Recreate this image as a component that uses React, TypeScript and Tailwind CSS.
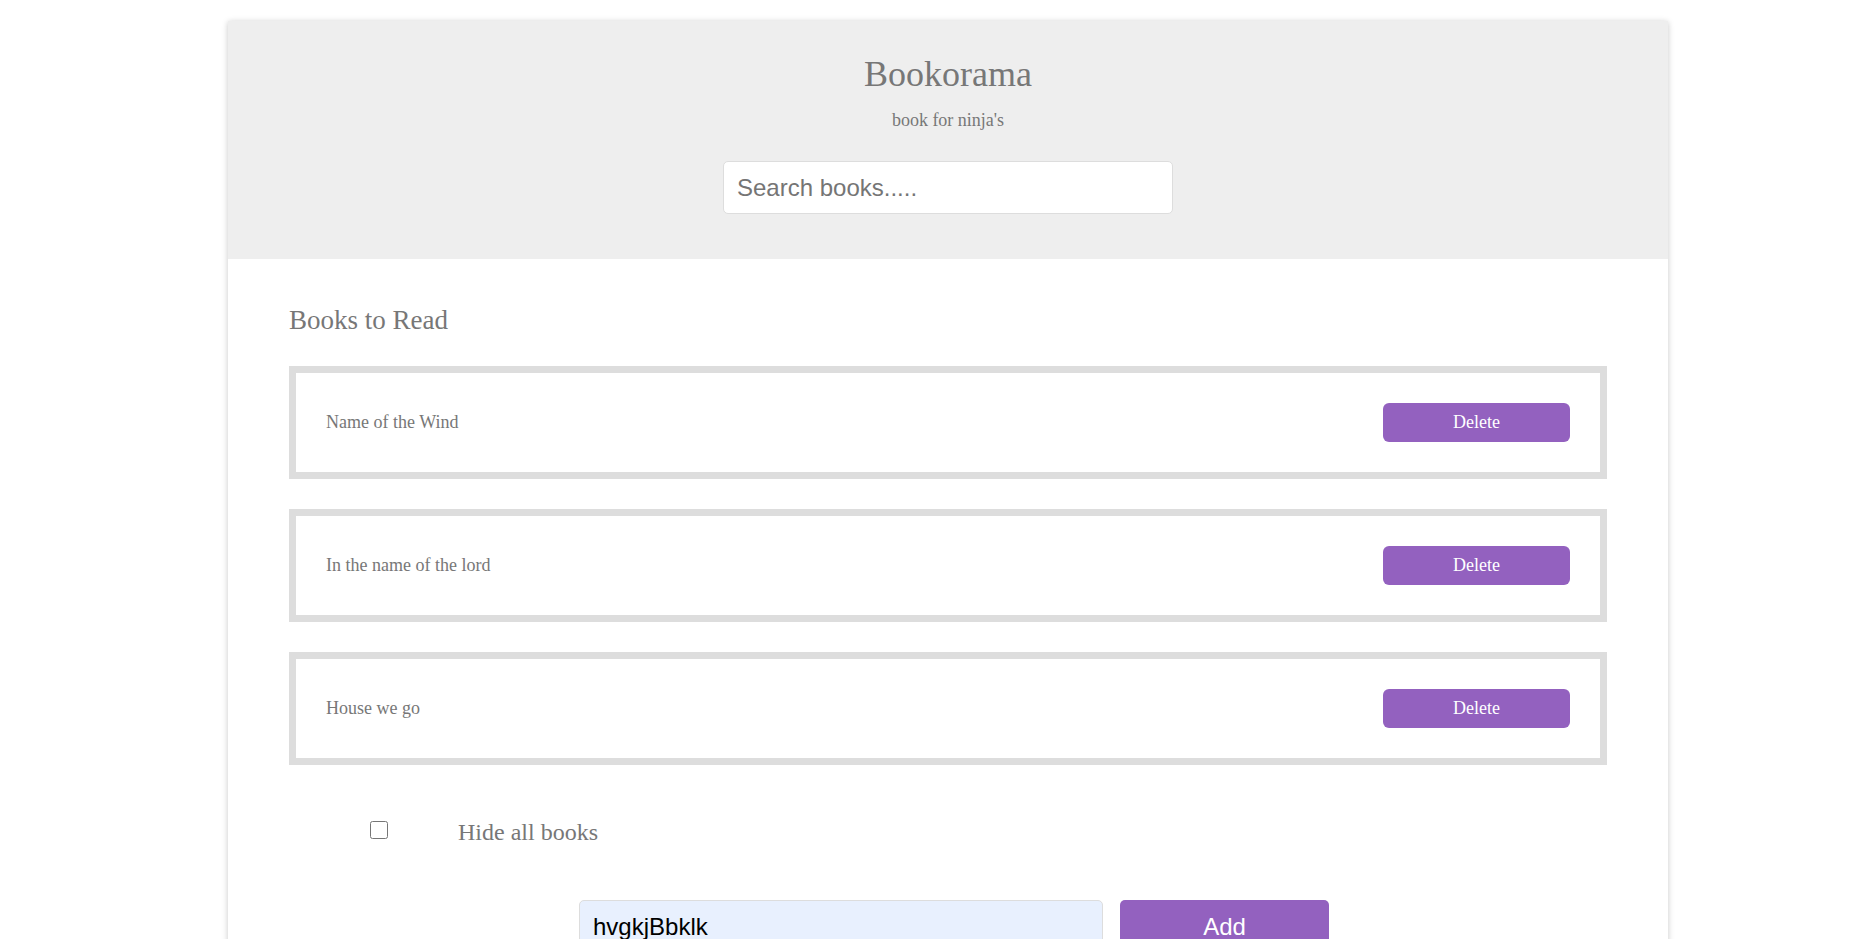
import { useState } from 'react';

const initialBooks = ['Name of the Wind', 'In the name of the lord', 'House we go'];

export default function App() {
  const [books, setBooks] = useState(initialBooks);
  const [hidden, setHidden] = useState(false);
  const [search, setSearch] = useState('');
  const [newBook, setNewBook] = useState('hvgkjBbklk');

  const visible = books.filter((b) => b.toLowerCase().includes(search.toLowerCase()));

  const addBook = () => {
    if (!newBook.trim()) return;
    setBooks([...books, newBook.trim()]);
    setNewBook('');
  };

  return (
    <div className="min-h-screen bg-white font-['Liberation_Serif',serif] text-[#777]">
      <div className="ml-[228px] mt-[21px] w-[1440px] bg-white shadow-[0_1px_6px_rgba(0,0,0,0.22)]">
        {/* Header */}
        <header className="flex h-[238px] flex-col items-center bg-[#eee] pt-[32px]">
          <h1 className="text-[36px] leading-[43px] font-normal">Bookorama</h1>
          <p className="mt-[13px] text-[18px] leading-[22px]">book for ninja's</p>
          <input
            value={search}
            onChange={(e) => setSearch(e.target.value)}
            placeholder="Search books....."
            className="mt-[30px] h-[53px] w-[450px] rounded-[5px] border border-[#ddd] bg-white px-[13px] font-['Liberation_Sans',sans-serif] text-[24px] text-[#555] placeholder:text-[#757575] outline-none"
          />
        </header>

        {/* Book list */}
        <div className="px-[61px] pt-[44px] pb-[40px]">
          <h2 className="text-[27px] leading-[34px]">Books to Read</h2>
          {!hidden && (
            <ul className="mt-[29px] flex flex-col gap-[30px]">
              {visible.map((book) => (
                <li
                  key={book}
                  className="flex h-[113px] items-center justify-between border-[7px] border-[#ddd] px-[30px]"
                >
                  <span className="text-[18px]">{book}</span>
                  <button
                    onClick={() => setBooks(books.filter((b) => b !== book))}
                    className="h-[39px] w-[187px] rounded-[6px] bg-[#9361bf] text-[18px] text-white"
                  >
                    Delete
                  </button>
                </li>
              ))}
            </ul>
          )}

          <div className="mt-[47px] flex h-[40px] items-center pl-[81px]">
            <input
              type="checkbox"
              checked={hidden}
              onChange={(e) => setHidden(e.target.checked)}
              className="mb-[4px] h-[18px] w-[18px]"
            />
            <label className="ml-[70px] text-[24px]">Hide all books</label>
          </div>

          <div className="mt-[48px] flex justify-center gap-[17px] pl-[12px]">
            <input
              value={newBook}
              onChange={(e) => setNewBook(e.target.value)}
              className="h-[53px] w-[524px] rounded-[5px] border border-[#ddd] bg-[#e8f0fe] px-[13px] font-['Liberation_Sans',sans-serif] text-[24px] text-black outline-none"
            />
            <button
              onClick={addBook}
              className="h-[53px] w-[209px] rounded-[5px] bg-[#9361bf] font-['Liberation_Sans',sans-serif] text-[24px] text-white"
            >
              Add
            </button>
          </div>
        </div>
      </div>
    </div>
  );
}
